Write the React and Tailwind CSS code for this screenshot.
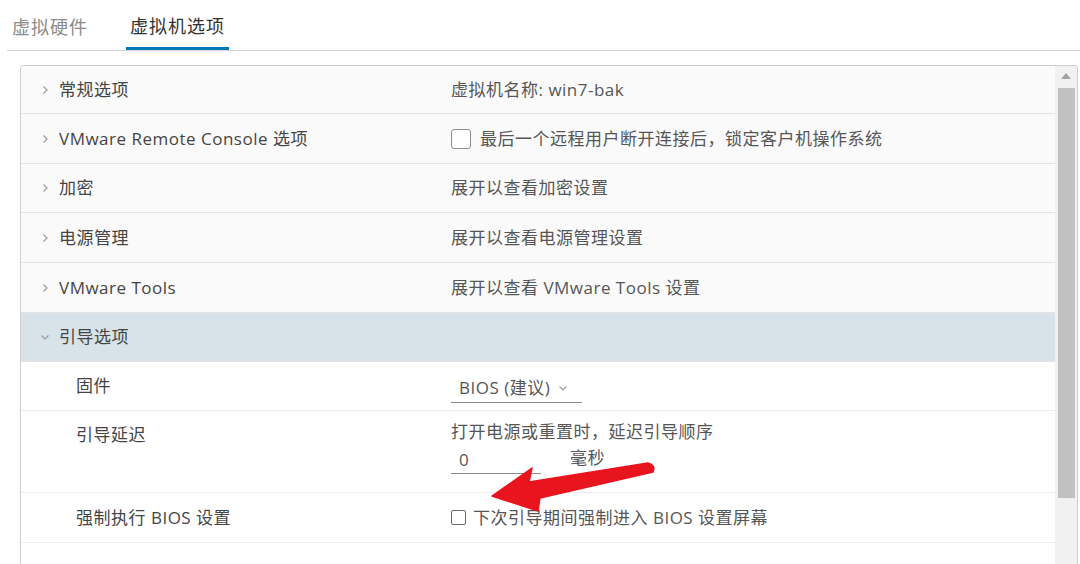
import React from "react";

const font = { fontFamily: '"Open Sans", "Noto Sans CJK SC", sans-serif' };

function Chevron({ down }) {
  return (
    <svg width="10" height="10" viewBox="0 0 10 10" className="shrink-0">
      {down ? (
        <path d="M1.5 3.5 L5 7 L8.5 3.5" fill="none" stroke="#9a9a9a" strokeWidth="1.2" />
      ) : (
        <path d="M3.5 1.5 L7 5 L3.5 8.5" fill="none" stroke="#9a9a9a" strokeWidth="1.2" />
      )}
    </svg>
  );
}

function HeadRow({ label, right, h, expanded }) {
  return (
    <div
      className={`flex items-center border-b border-[#e4e4e4] ${expanded ? "bg-[#d8e3e9]" : "bg-[#fafafa]"}`}
      style={{ height: h }}
    >
      <div className="w-[430px] flex items-center pl-[19px] gap-[9px] shrink-0">
        <Chevron down={expanded} />
        <span className="text-[17px] tracking-[0.5px] text-[#454545]">{label}</span>
      </div>
      <div className="flex items-center text-[17px] tracking-[0.5px] text-[#565656]">{right}</div>
    </div>
  );
}

function SubRow({ label, children, h, top }) {
  return (
    <div
      className={`flex ${top ? "items-start" : "items-center"} border-b border-[#ececec] bg-white`}
      style={{ height: h }}
    >
      <div className={`w-[430px] pl-[55px] shrink-0 text-[17px] tracking-[0.5px] text-[#454545] ${top ? "pt-[11px]" : ""}`}>{label}</div>
      <div className={`text-[17px] tracking-[0.5px] text-[#565656] ${top ? "pt-[11px]" : ""}`}>{children}</div>
    </div>
  );
}

export default function App() {
  return (
    <div className="relative w-[1080px] h-[564px] bg-white overflow-hidden" style={font}>
      {/* Tabs */}
      <div className="ml-[7px] h-[51px] flex items-end border-b border-[#d4d4d4]">
        <div className="pl-[5px] pb-[9px] text-[18px] text-[#8a8a8a] tracking-[1px]">虚拟硬件</div>
        <div className="ml-[38px] px-[4px] pb-[7px] border-b-[3px] border-[#0079b8] text-[18px] text-[#333] tracking-[1px]">
          虚拟机选项
        </div>
      </div>

      {/* Panel */}
      <div className="ml-[20px] mt-[14px] w-[1058px] h-[520px] border border-[#cfcfcf] rounded-t-[3px] flex overflow-hidden">
        <div className="flex-1 flex flex-col">
          <HeadRow label="常规选项" h={48} right={<span>虚拟机名称: win7-bak</span>} />
          <HeadRow
            label="VMware Remote Console 选项"
            h={50}
            right={
              <span className="flex items-center gap-[9px]">
                <span className="w-[20px] h-[20px] border border-[#8c8c8c] rounded-[3px] bg-white" />
                <span>最后一个远程用户断开连接后，锁定客户机操作系统</span>
              </span>
            }
          />
          <HeadRow label="加密" h={49} right={<span>展开以查看加密设置</span>} />
          <HeadRow label="电源管理" h={50} right={<span>展开以查看电源管理设置</span>} />
          <HeadRow label="VMware Tools" h={50} right={<span>展开以查看 VMware Tools 设置</span>} />
          <HeadRow label="引导选项" h={49} expanded right={null} />
          <SubRow label="固件" h={49}>
            <div className="w-[131px] h-[30px] border-b border-[#8c8c8c] flex items-center pl-[8px] gap-[8px] mt-[4px]">
              <span>BIOS (建议)</span>
              <Chevron down />
            </div>
          </SubRow>
          <SubRow label="引导延迟" h={82} top>
            <div className="flex flex-col">
              <span className="leading-[22px] -mt-[1px]">打开电源或重置时，延迟引导顺序</span>
              <div className="flex items-center mt-[3px]">
                <div className="w-[90px] h-[28px] border-b border-[#8c8c8c] pl-[8px] flex items-center">0</div>
                <span className="ml-[29px] -mt-[4px]">毫秒</span>
              </div>
            </div>
          </SubRow>
          <SubRow label="强制执行 BIOS 设置" h={50}>
            <span className="flex items-center gap-[7px]">
              <span className="w-[15px] h-[15px] border-[1.5px] border-[#6a6a6a] rounded-[2px] bg-white" />
              <span>下次引导期间强制进入 BIOS 设置屏幕</span>
            </span>
          </SubRow>
          <div className="flex-1 bg-white" />
        </div>
        {/* Scrollbar */}
        <div className="w-[22px] bg-[#f1f1f1] flex flex-col items-center pt-[7px]">
          <svg width="10" height="6" viewBox="0 0 10 6">
            <path d="M0 6 L5 0 L10 6 Z" fill="#a3a3a3" />
          </svg>
          <div className="mt-[9px] w-[17px] h-[410px] bg-[#c1c1c1]" />
        </div>
      </div>

      {/* Red arrow annotation */}
      <svg className="absolute left-0 top-0 pointer-events-none" width="1080" height="564">
        <path
          d="M492 496 L532 468 L529 482 L648 463 Q656 465 653 472 L540 498 L538 511 Z"
          fill="#e8141e"
          stroke="#e8141e"
          strokeWidth="1.5"
          strokeLinejoin="round"
        />
      </svg>
    </div>
  );
}
